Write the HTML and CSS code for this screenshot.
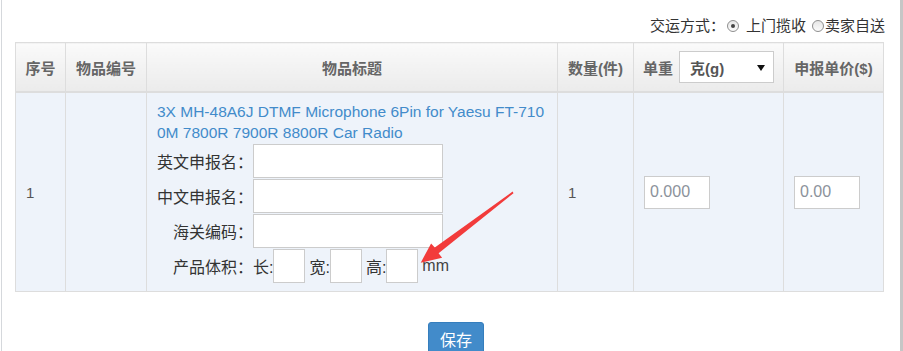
FILE: index.html
```html
<!DOCTYPE html>
<html lang="zh-CN">
<head>
    <meta charset="UTF-8">
    <title>申报信息</title>
    <link rel="stylesheet" href="styles.css">
</head>
<body>
    <div class="page">
        <div class="ship-way">
            <span>交运方式：</span><span class="radio checked"></span><span>上门揽收</span><span class="radio second"></span><span>卖家自送</span>
        </div>

        <table class="goods">
            <colgroup>
                <col class="c-no">
                <col class="c-code">
                <col class="c-title">
                <col class="c-qty">
                <col class="c-weight">
                <col class="c-price">
            </colgroup>
            <thead>
                <tr>
                    <th>序号</th>
                    <th>物品编号</th>
                    <th>物品标题</th>
                    <th>数量(件)</th>
                    <th>
                        <span class="weight-head">单重<span class="select">克(g)<i class="caret"></i></span></span>
                    </th>
                    <th>申报单价($)</th>
                </tr>
            </thead>
            <tbody>
                <tr>
                    <td>1</td>
                    <td></td>
                    <td class="title-cell">
                        <a class="title" href="#">3X MH-48A6J DTMF Microphone 6Pin for Yaesu FT-7100M 7800R 7900R 8800R Car Radio</a>
                        <div class="field"><label>英文申报名：</label><input class="text-input" type="text"></div>
                        <div class="field"><label>中文申报名：</label><input class="text-input" type="text"></div>
                        <div class="field"><label>海关编码：</label><input class="text-input" type="text"></div>
                        <div class="field">
                            <label>产品体积：</label>
                            <span class="dim">长:</span><input class="size-input" type="text">
                            <span class="dim">宽:</span><input class="size-input" type="text">
                            <span class="dim">高:</span><input class="size-input" type="text">
                            <span class="unit">mm</span>
                        </div>
                    </td>
                    <td>1</td>
                    <td><input class="num-input" type="text" value="0.000"></td>
                    <td><input class="num-input" type="text" value="0.00"></td>
                </tr>
            </tbody>
        </table>

        <div class="actions">
            <button class="btn-save">保存</button>
        </div>
    </div>

    <svg class="arrow" width="903" height="351" viewBox="0 0 903 351">
        <polygon fill="#f23b3b" points="420.7,262.7 431.1,243.4 434.8,247.6 512.6,191.6 513.5,193.2 438.6,253.2 442.1,257.8"/>
    </svg>
</body>
</html>
```

FILE: styles.css
```css
body {
    margin: 0;
    font-family: "Liberation Sans", "Noto Sans CJK SC", sans-serif;
    color: #333;
    position: relative;
    width: 903px;
    height: 351px;
    overflow: hidden;
}
.page {
    margin-left: 1px;
    border-left: 1px solid #d5d8dc;
    border-right: 3px solid #c6c6c6;
    height: 351px;
    box-sizing: border-box;
}
.ship-way {
    display: flex;
    justify-content: flex-end;
    align-items: center;
    padding: 16px 15px 0 0;
    height: 20px;
    margin-bottom: 6px;
    font-size: 15px;
    line-height: 20px;
}
.radio {
    display: inline-block;
    width: 10px;
    height: 10px;
    border: 1px solid #8e8e8e;
    border-radius: 50%;
    background: linear-gradient(#e6e6e6, #fbfbfb);
    position: relative;
    margin: 0 7px 0 2px;
}
.radio.second {
    margin: 0 1px 0 6px;
}
.radio.checked::after {
    content: "";
    position: absolute;
    left: 3px;
    top: 3px;
    width: 4px;
    height: 4px;
    border-radius: 50%;
    background: #444;
}
.goods {
    margin-left: 13px;
    width: 869px;
    border-collapse: collapse;
    table-layout: fixed;
}
.c-no { width: 50px; }
.c-code { width: 81px; }
.c-title { width: 411px; }
.c-qty { width: 76px; }
.c-weight { width: 150px; }
.c-price { width: 100px; }
.goods th {
    height: 48px;
    padding: 0;
    background: linear-gradient(#fafafa, #ebebeb);
    border: 1px solid #dddddd;
    border-bottom: 2px solid #dddddd;
    color: #666;
    font-size: 15px;
    font-weight: bold;
    text-align: center;
    white-space: nowrap;
}
.weight-head {
    display: inline-flex;
    align-items: center;
}
.select {
    display: inline-flex;
    align-items: center;
    position: relative;
    box-sizing: border-box;
    width: 95px;
    height: 32px;
    margin-left: 6px;
    padding-left: 10px;
    border: 1px solid #cccccc;
    background: #fff;
    color: #555;
    text-align: left;
}
.caret {
    position: absolute;
    right: 8px;
    top: 13px;
    border-left: 4px solid transparent;
    border-right: 4px solid transparent;
    border-top: 6px solid #111;
}
.goods td {
    padding: 8px 10px;
    background: #eef3fa;
    border: 1px solid #dddddd;
    vertical-align: middle;
    font-size: 15px;
    color: #555;
}
.title {
    display: block;
    color: #428bca;
    text-decoration: none;
    font-size: 15.5px;
    line-height: 21px;
    word-break: break-all;
}
.field {
    display: flex;
    align-items: center;
    height: 34px;
    margin-top: 1px;
    font-size: 16px;
    color: #333;
}
.field label {
    width: 96px;
    text-align: right;
}
.text-input {
    box-sizing: border-box;
    width: 190px;
    height: 34px;
    margin: 0;
    border: 1px solid #cccccc;
    background: #fff;
}
.size-input {
    box-sizing: border-box;
    width: 32px;
    height: 34px;
    margin: 0;
    border: 1px solid #cccccc;
    background: #fff;
}
.dim {
    margin-left: 4px;
}
.field label + .dim {
    margin-left: 0;
}
.unit {
    margin-left: 4px;
    color: #444;
}
.num-input {
    box-sizing: border-box;
    width: 66px;
    height: 33px;
    margin: 0;
    padding: 0 5px;
    border: 1px solid #cccccc;
    background: #fff;
    font-family: "Liberation Sans", sans-serif;
    font-size: 16px;
    color: #8c929b;
}
.actions {
    padding: 30px 0 0 10px;
    text-align: center;
}
.btn-save {
    box-sizing: border-box;
    width: 56px;
    height: 34px;
    padding: 0;
    border: 1px solid #357ebd;
    border-radius: 3px;
    background: #428bca;
    color: #fff;
    font-family: "Noto Sans CJK SC", sans-serif;
    font-size: 16px;
}
.arrow {
    position: absolute;
    left: 0;
    top: 0;
    pointer-events: none;
}
```
